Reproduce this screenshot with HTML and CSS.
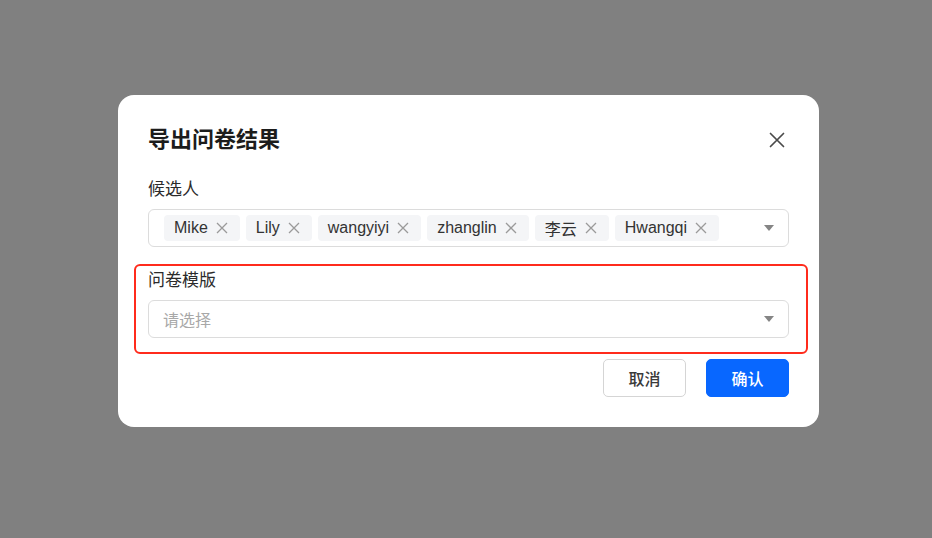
FILE: index.html
```html
<!DOCTYPE html>
<html lang="zh-CN">
<head>
    <meta charset="UTF-8">
    <title>导出问卷结果</title>
    <link rel="stylesheet" href="styles.css">
</head>
<body>
    <div class="dialog">
        <div class="dialog-header">
            <h2>导出问卷结果</h2>
            <svg class="close" width="16" height="16" viewBox="0 0 16 16">
                <path d="M1.5 1.5 L14.5 14.5 M14.5 1.5 L1.5 14.5" stroke="#4a4a4a" stroke-width="1.7" stroke-linecap="round"/>
            </svg>
        </div>
        <div class="field">
            <label>候选人</label>
            <div class="select">
                <div class="tags">
                    <span class="tag">Mike<svg viewBox="0 0 12 12"><path d="M1 1 L11 11 M11 1 L1 11"/></svg></span>
                    <span class="tag">Lily<svg viewBox="0 0 12 12"><path d="M1 1 L11 11 M11 1 L1 11"/></svg></span>
                    <span class="tag">wangyiyi<svg viewBox="0 0 12 12"><path d="M1 1 L11 11 M11 1 L1 11"/></svg></span>
                    <span class="tag">zhanglin<svg viewBox="0 0 12 12"><path d="M1 1 L11 11 M11 1 L1 11"/></svg></span>
                    <span class="tag">李云<svg viewBox="0 0 12 12"><path d="M1 1 L11 11 M11 1 L1 11"/></svg></span>
                    <span class="tag">Hwangqi<svg viewBox="0 0 12 12"><path d="M1 1 L11 11 M11 1 L1 11"/></svg></span>
                </div>
                <span class="arrow"></span>
            </div>
        </div>
        <div class="field marked">
            <label>问卷模版</label>
            <div class="select">
                <span class="placeholder">请选择</span>
                <span class="arrow"></span>
            </div>
        </div>
        <div class="footer">
            <button class="btn">取消</button>
            <button class="btn primary">确认</button>
        </div>
    </div>
</body>
</html>
```

FILE: styles.css
```css
* {
    margin: 0;
    padding: 0;
    box-sizing: border-box;
    font-family: "Liberation Sans", "Noto Sans CJK SC", sans-serif;
}
body {
    width: 932px;
    height: 538px;
    background: #808080;
    padding-top: 95px;
    padding-left: 118px;
}
.dialog {
    width: 701px;
    height: 332px;
    background: #fff;
    border-radius: 16px;
    padding: 30px;
}
.dialog-header {
    display: flex;
    justify-content: space-between;
    align-items: center;
    height: 30px;
}
.dialog-header h2 {
    font-size: 22px;
    font-weight: 700;
    color: #1c1c1c;
    line-height: 30px;
}
.close {
    margin-right: 4px;
}
.field {
    margin-top: 23px;
}
.field label {
    display: block;
    font-size: 17px;
    line-height: 24px;
    color: #2b2b2b;
    margin-bottom: 7px;
}
.marked {
    position: relative;
    margin-top: 22px;
}
.marked::after {
    content: "";
    position: absolute;
    left: -14px;
    right: -19px;
    top: -5px;
    bottom: -16px;
    border: 2px solid #ff2b1c;
    border-radius: 6px;
}
.select {
    display: flex;
    align-items: center;
    justify-content: space-between;
    height: 38px;
    border: 1px solid #dcdcdc;
    border-radius: 6px;
    padding: 0 14px 0 15px;
}
.tags {
    display: flex;
    gap: 6px;
}
.tag {
    display: flex;
    align-items: center;
    height: 26px;
    padding: 0 12px 0 10px;
    background: #f4f5f7;
    border-radius: 4px;
    font-size: 16px;
    color: #333;
}
.tag svg {
    width: 12px;
    height: 12px;
    margin-left: 8px;
    stroke: #9a9a9a;
    stroke-width: 1.3;
    fill: none;
}
.placeholder {
    font-size: 16px;
    color: #a8a8a8;
    margin-left: -1px;
}
.arrow {
    width: 0;
    height: 0;
    border-left: 5px solid transparent;
    border-right: 5px solid transparent;
    border-top: 6px solid #858585;
}
.footer {
    display: flex;
    justify-content: flex-end;
    gap: 20px;
    margin-top: 21px;
}
.btn {
    width: 83px;
    height: 38px;
    border: 1px solid #d5d5d5;
    border-radius: 5px;
    background: #fff;
    font-size: 16px;
    font-weight: 500;
    color: #3a3a3a;
}
.btn.primary {
    background: #0867ff;
    border-color: #0867ff;
    color: #fff;
}
```
